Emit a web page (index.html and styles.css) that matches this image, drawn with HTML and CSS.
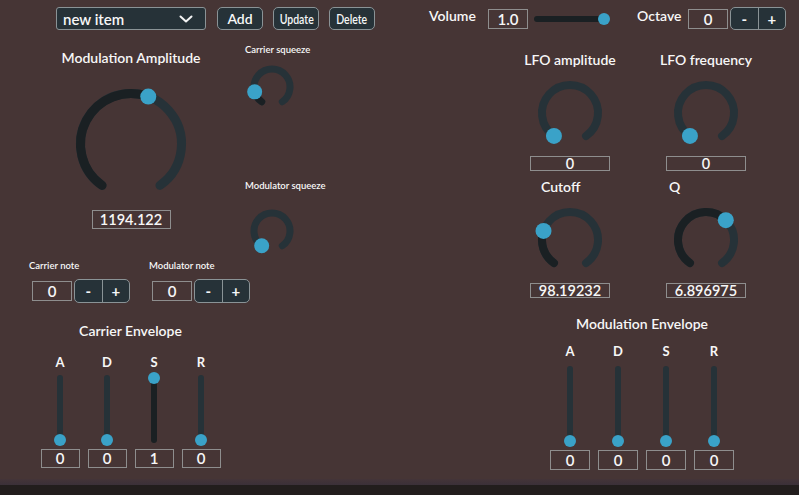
FILE: index.html
```html
<!DOCTYPE html>
<html>
<head>
<meta charset="utf-8">
<link rel="stylesheet" href="styles.css">
</head>
<body>
<div class="app">
  <header class="toolbar">
    <div class="select"><span>new item</span><svg class="chev" width="14" height="8" viewBox="0 0 14 8"><path d="M1.5 1.5 L7 6.5 L12.5 1.5" fill="none" stroke="#f4f4f4" stroke-width="2" stroke-linecap="round" stroke-linejoin="round"/></svg></div>
    <button class="btn btn-add">Add</button>
    <button class="btn btn-narrow"><span>Update</span></button>
    <button class="btn btn-narrow"><span>Delete</span></button>
    <span class="tlabel tlabel-vol">Volume</span>
    <div class="val val-top">1.0</div>
    <div class="hslider"><div class="htrack"><div class="hfill" style="width:100%"></div></div><div class="hthumb" style="left:64px"></div></div>
    <span class="tlabel tlabel-oct">Octave</span>
    <div class="val val-top">0</div>
    <div class="stepper stepper-top"><span>-</span><span>+</span></div>
  </header>
  <div class="main">
    <section class="left">
      <div class="knobs-row">
        <div class="amp">
          <div class="label">Modulation Amplitude</div>
          <svg class="knob-big" width="120" height="120" viewBox="0 0 120 120">
            <path d="M31.03 101.37 A50.5 50.5 0 1 1 88.97 101.37" fill="none" stroke="#263238" stroke-width="9" stroke-linecap="round"/>
            <path d="M31.03 101.37 A50.5 50.5 0 0 1 77.27 12.55" fill="none" stroke="#1a2023" stroke-width="9" stroke-linecap="round"/>
            <circle cx="77.27" cy="12.55" r="8" fill="#3aa2c8"/>
          </svg>
          <div class="val val-amp">1194.122</div>
        </div>
        <div class="squeeze">
          <div class="mini-label">Carrier squeeze</div>
          <svg class="knob-sm knob-sm-1" width="52" height="52" viewBox="0 0 52 52">
            <path d="M15.68 40.75 A18 18 0 1 1 36.32 40.75" fill="none" stroke="#263238" stroke-width="7" stroke-linecap="round"/>
            <path d="M15.68 40.75 A18 18 0 0 1 8.67 30.84" fill="none" stroke="#1a2023" stroke-width="7" stroke-linecap="round"/>
            <circle cx="8.67" cy="30.84" r="7.5" fill="#3aa2c8"/>
          </svg>
          <div class="mini-label mini-label-2">Modulator squeeze</div>
          <svg class="knob-sm knob-sm-2" width="52" height="52" viewBox="0 0 52 52">
            <path d="M15.68 40.75 A18 18 0 1 1 36.32 40.75" fill="none" stroke="#263238" stroke-width="7" stroke-linecap="round"/>
            <circle cx="15.68" cy="40.75" r="7.5" fill="#3aa2c8"/>
          </svg>
        </div>
      </div>
      <div class="notes">
        <div class="note-group">
          <div class="mini-label">Carrier note</div>
          <div class="note-ctrl"><div class="val val-note">0</div><div class="stepper"><span>-</span><span>+</span></div></div>
        </div>
        <div class="note-group">
          <div class="mini-label">Modulator note</div>
          <div class="note-ctrl"><div class="val val-note">0</div><div class="stepper"><span>-</span><span>+</span></div></div>
        </div>
      </div>
      <div class="env env-carrier">
        <div class="label">Carrier Envelope</div>
        <div class="env-cols">
          <div class="env-col"><div class="letter">A</div><div class="vtrack"><div class="vthumb" style="top:59px"></div></div><div class="val val-env">0</div></div>
          <div class="env-col"><div class="letter">D</div><div class="vtrack"><div class="vthumb" style="top:59px"></div></div><div class="val val-env">0</div></div>
          <div class="env-col"><div class="letter">S</div><div class="vtrack vtrack-full"><div class="vthumb" style="top:-3px"></div></div><div class="val val-env">1</div></div>
          <div class="env-col"><div class="letter">R</div><div class="vtrack"><div class="vthumb" style="top:59px"></div></div><div class="val val-env">0</div></div>
        </div>
      </div>
    </section>
    <section class="right">
      <div class="knob-grid">
        <div class="kcell">
          <div class="label">LFO amplitude</div>
          <svg class="knob-md" width="76" height="76" viewBox="0 0 76 76">
            <path d="M21.94 60.94 A28 28 0 1 1 54.06 60.94" fill="none" stroke="#263238" stroke-width="8" stroke-linecap="round"/>
            <circle cx="21.94" cy="60.94" r="8" fill="#3aa2c8"/>
          </svg>
          <div class="val val-k">0</div>
        </div>
        <div class="kcell">
          <div class="label">LFO frequency</div>
          <svg class="knob-md" width="76" height="76" viewBox="0 0 76 76">
            <path d="M21.94 60.94 A28 28 0 1 1 54.06 60.94" fill="none" stroke="#263238" stroke-width="8" stroke-linecap="round"/>
            <circle cx="21.94" cy="60.94" r="8" fill="#3aa2c8"/>
          </svg>
          <div class="val val-k">0</div>
        </div>
        <div class="kcell">
          <div class="label label-cutoff">Cutoff</div>
          <svg class="knob-md" width="76" height="76" viewBox="0 0 76 76">
            <path d="M21.94 60.94 A28 28 0 1 1 54.06 60.94" fill="none" stroke="#263238" stroke-width="8" stroke-linecap="round"/>
            <path d="M21.94 60.94 A28 28 0 0 1 11.53 28.88" fill="none" stroke="#1a2023" stroke-width="8" stroke-linecap="round"/>
            <circle cx="11.53" cy="28.88" r="8" fill="#3aa2c8"/>
          </svg>
          <div class="val val-k">98.19232</div>
        </div>
        <div class="kcell">
          <div class="label label-q">Q</div>
          <svg class="knob-md" width="76" height="76" viewBox="0 0 76 76">
            <path d="M21.94 60.94 A28 28 0 1 1 54.06 60.94" fill="none" stroke="#263238" stroke-width="8" stroke-linecap="round"/>
            <path d="M21.94 60.94 A28 28 0 1 1 57.8 18.2" fill="none" stroke="#1a2023" stroke-width="8" stroke-linecap="round"/>
            <circle cx="57.8" cy="18.2" r="8" fill="#3aa2c8"/>
          </svg>
          <div class="val val-k">6.896975</div>
        </div>
      </div>
      <div class="env env-mod">
        <div class="label">Modulation Envelope</div>
        <div class="env-cols">
          <div class="env-col"><div class="letter">A</div><div class="vtrack"><div class="vthumb" style="top:69px"></div></div><div class="val val-env">0</div></div>
          <div class="env-col"><div class="letter">D</div><div class="vtrack"><div class="vthumb" style="top:69px"></div></div><div class="val val-env">0</div></div>
          <div class="env-col"><div class="letter">S</div><div class="vtrack"><div class="vthumb" style="top:69px"></div></div><div class="val val-env">0</div></div>
          <div class="env-col"><div class="letter">R</div><div class="vtrack"><div class="vthumb" style="top:69px"></div></div><div class="val val-env">0</div></div>
        </div>
      </div>
    </section>
  </div>
</div>
<div class="fade"></div>
<div class="bar"></div>
</body>
</html>
```
FILE: styles.css
```css
* { box-sizing: border-box; }

body {
  margin: 0;
  width: 799px;
  height: 495px;
  overflow: hidden;
  background: #221d1d;
  color: #f7f7f7;
  font-family: Lato, "Open Sans", sans-serif;
  font-weight: 600;
}

.app {
  height: 479px;
  background: #463535;
}

.fade {
  height: 6px;
  background: linear-gradient(#443438, #3b3039);
}

.bar {
  height: 10px;
  background: #221d1d;
}

/* toolbar */
.toolbar {
  display: flex;
  align-items: flex-start;
  height: 30px;
  padding: 7px 0 0 56px;
}

.select {
  width: 150px;
  height: 23px;
  display: flex;
  align-items: center;
  justify-content: space-between;
  padding: 0 12px 0 6px;
  background: #263238;
  border: 1px solid #8a9396;
  border-radius: 3px;
  font-size: 15px;
}

.chev { display: block; margin-top: 1px; }

.btn {
  width: 46px;
  height: 23px;
  padding: 0;
  margin-left: 10px;
  background: #263238;
  border: 1px solid #8a9396;
  border-radius: 5px;
  color: #f7f7f7;
  font-family: Lato, sans-serif;
  font-weight: 600;
  font-size: 14px;
}

.btn-add { margin-left: 11px; }

.btn-narrow span {
  display: inline-block;
  transform: scaleX(0.75);
}

.tlabel {
  font-size: 14px;
  line-height: 17px;
}

.tlabel-vol { width: 59px; margin-left: 54px; }
.tlabel-oct { width: 51px; margin-left: 28px; }

.val {
  border: 1px solid #8e8e8e;
  text-align: center;
  font-size: 14px;
}

.val-top {
  width: 40px;
  height: 20px;
  line-height: 18px;
  margin-top: 2px;
  font-size: 15px;
}

.hslider {
  position: relative;
  width: 75px;
  height: 12px;
  margin: 6px 0 0 6px;
}

.htrack {
  position: absolute;
  left: 0;
  right: 0;
  top: 3px;
  height: 6px;
  border-radius: 3px;
  background: #263238;
  overflow: hidden;
}

.hfill { height: 100%; background: #1a2023; }

.hthumb {
  position: absolute;
  top: 0;
  width: 12px;
  height: 12px;
  border-radius: 50%;
  background: #3aa2c8;
}

.stepper {
  display: flex;
  width: 56px;
  height: 24px;
  margin-left: 2px;
  background: #263238;
  border: 1px solid #8a9396;
  border-radius: 5px;
  font-size: 15px;
  font-weight: 700;
}

.stepper-top { height: 23px; }

.stepper span {
  flex: 1;
  display: flex;
  align-items: center;
  justify-content: center;
}

.stepper span + span { border-left: 1px solid #8a9396; }

/* main */
.main { display: flex; }

.left { width: 400px; }

.label {
  font-size: 14px;
  line-height: 17px;
  text-align: center;
  white-space: nowrap;
}

.mini-label {
  font-size: 9.5px;
  line-height: 12px;
  white-space: nowrap;
}

.knobs-row { display: flex; align-items: flex-start; }

.amp {
  width: 182px;
  margin-left: 40px;
  padding-top: 19px;
  display: flex;
  flex-direction: column;
  align-items: center;
}

.knob-big { display: block; margin-top: 18px; }

.val-amp {
  width: 79px;
  height: 19px;
  line-height: 17px;
  margin-top: 6px;
  font-size: 14.5px;
}

.squeeze {
  margin-left: 23px;
  padding-top: 14px;
}

.knob-sm { display: block; margin-left: 1px; }
.knob-sm-1 { margin-top: 5px; }
.mini-label-2 { margin-top: 67px; }
.knob-sm-2 { margin-top: 13px; }

.notes {
  display: flex;
  gap: 19px;
  padding-left: 29px;
  margin-top: 3px;
}

.note-ctrl {
  display: flex;
  align-items: center;
  margin-top: 7px;
}

.val-note {
  width: 40px;
  height: 20px;
  line-height: 18px;
  margin-left: 3px;
  font-size: 15px;
}

.env-cols { display: flex; }

.env-col {
  width: 40px;
  display: flex;
  flex-direction: column;
  align-items: center;
}

.letter {
  font-size: 13px;
  line-height: 16px;
  font-weight: 700;
}

.vtrack {
  position: relative;
  width: 6px;
  border-radius: 3px;
  background: #263238;
}

.vtrack-full { background: #1a2023; }

.vthumb {
  position: absolute;
  left: -3px;
  width: 12px;
  height: 12px;
  border-radius: 50%;
  background: #3aa2c8;
}

.env-carrier {
  width: 181px;
  margin: 19px 0 0 40px;
}

.env-carrier .env-cols { gap: 7px; margin-top: 15px; }
.env-carrier .vtrack { height: 68px; margin-top: 5px; }
.env-carrier .val-env { width: 39px; height: 19px; line-height: 17px; margin-top: 6px; font-size: 15px; }

/* right */
.right { flex: 1; }

.knob-grid {
  display: grid;
  grid-template-columns: 80px 80px;
  column-gap: 56px;
  row-gap: 7px;
  margin-left: 130px;
  padding-top: 21px;
}

.kcell {
  display: flex;
  flex-direction: column;
  align-items: center;
}

.knob-md { display: block; margin-top: 7px; }

.label-cutoff { align-self: flex-start; margin-left: 11px; }
.label-q { align-self: flex-start; margin-left: 3px; }

.val-k {
  width: 80px;
  height: 15px;
  line-height: 13px;
  margin-top: 5px;
  font-size: 14.5px;
}

.env-mod {
  width: 184px;
  margin: 17px 0 0 150px;
}

.env-mod .env-cols { gap: 8px; margin-top: 11px; }
.env-mod .vtrack { height: 78px; margin-top: 7px; }
.env-mod .val-env { width: 40px; height: 20px; line-height: 18px; margin-top: 6px; font-size: 15px; }
```
